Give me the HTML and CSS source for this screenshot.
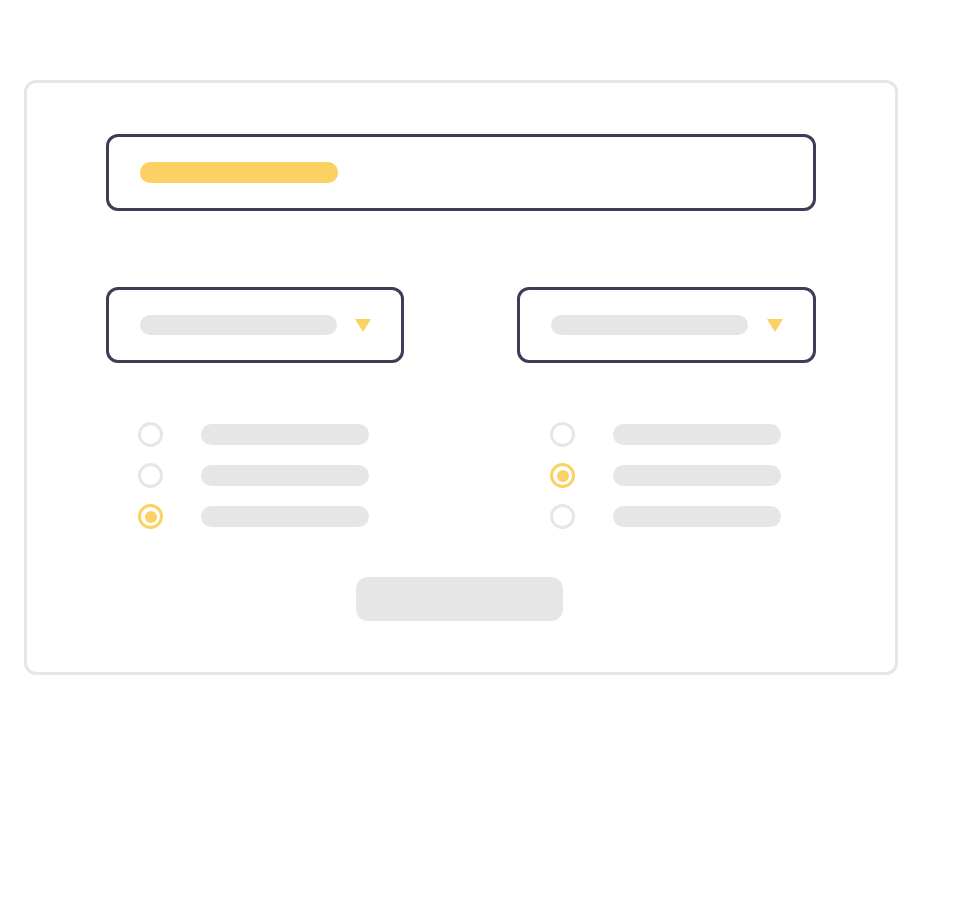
FILE: index.html
```html
<!DOCTYPE html>
<html lang="en">
<head>
<meta charset="utf-8">
<title>Form illustration</title>
<link rel="stylesheet" href="styles.css">
</head>
<body>
<div class="card">
  <div class="input">
    <span class="bar bar-yellow"></span>
  </div>
  <div class="columns">
    <div class="column">
      <div class="select">
        <span class="bar bar-grey"></span>
        <span class="caret"></span>
      </div>
      <ul class="options">
        <li class="option"><span class="radio"></span><span class="label"></span></li>
        <li class="option"><span class="radio"></span><span class="label"></span></li>
        <li class="option"><span class="radio checked"></span><span class="label"></span></li>
      </ul>
    </div>
    <div class="column">
      <div class="select">
        <span class="bar bar-grey"></span>
        <span class="caret"></span>
      </div>
      <ul class="options">
        <li class="option"><span class="radio"></span><span class="label"></span></li>
        <li class="option"><span class="radio checked"></span><span class="label"></span></li>
        <li class="option"><span class="radio"></span><span class="label"></span></li>
      </ul>
    </div>
  </div>
  <div class="actions">
    <span class="button"></span>
  </div>
</div>
</body>
</html>
```
FILE: styles.css
```css
html, body {
  margin: 0;
  padding: 0;
  background: #ffffff;
  font-family: "Liberation Sans", Arial, sans-serif;
}

body {
  width: 968px;
  height: 918px;
  padding: 80px 0 0 24px;
  box-sizing: border-box;
}

.card {
  box-sizing: border-box;
  width: 874px;
  height: 595px;
  border: 3px solid #e6e6e6;
  border-radius: 12px;
  padding: 51px 79px 0 79px;
  display: flex;
  flex-direction: column;
}

.input {
  box-sizing: border-box;
  height: 77px;
  border: 3px solid #3f3d56;
  border-radius: 12px;
  padding: 0 31px;
  display: flex;
  align-items: center;
}

.bar {
  display: block;
  width: 198px;
  height: 20px;
  border-radius: 10px;
}

.bar-yellow {
  background: #fbd163;
  height: 21px;
}

.bar-grey {
  background: #e6e6e6;
  width: 197px;
}

.columns {
  margin-top: 76px;
  display: grid;
  grid-template-columns: 298px 299px;
  column-gap: 113px;
}

.select {
  box-sizing: border-box;
  height: 76px;
  border: 3px solid #3f3d56;
  border-radius: 12px;
  padding: 0 30px 0 31px;
  display: flex;
  align-items: center;
  justify-content: space-between;
}

.caret {
  width: 0;
  height: 0;
  border-left: 8px solid transparent;
  border-right: 8px solid transparent;
  border-top: 13px solid #fbd163;
}

.options {
  list-style: none;
  margin: 59px 0 0 0;
  padding: 0 0 0 32px;
  display: flex;
  flex-direction: column;
  gap: 16px;
}

.column + .column .options {
  padding-left: 33px;
}

.option {
  display: flex;
  align-items: center;
  gap: 38px;
  height: 25px;
}

.radio {
  box-sizing: border-box;
  width: 25px;
  height: 25px;
  border: 3px solid #e6e6e6;
  border-radius: 50%;
  display: flex;
  align-items: center;
  justify-content: center;
}

.radio.checked {
  border: 3.5px solid #fbd163;
}

.radio.checked::after {
  content: "";
  width: 12px;
  height: 12px;
  border-radius: 50%;
  background: #fbd163;
}

.label {
  width: 168px;
  height: 21px;
  border-radius: 10.5px;
  background: #e6e6e6;
}

.actions {
  margin-top: 48px;
  display: flex;
  justify-content: center;
  padding-right: 3px;
}

.button {
  width: 207px;
  height: 44px;
  border-radius: 12px;
  background: #e6e6e6;
}
```
